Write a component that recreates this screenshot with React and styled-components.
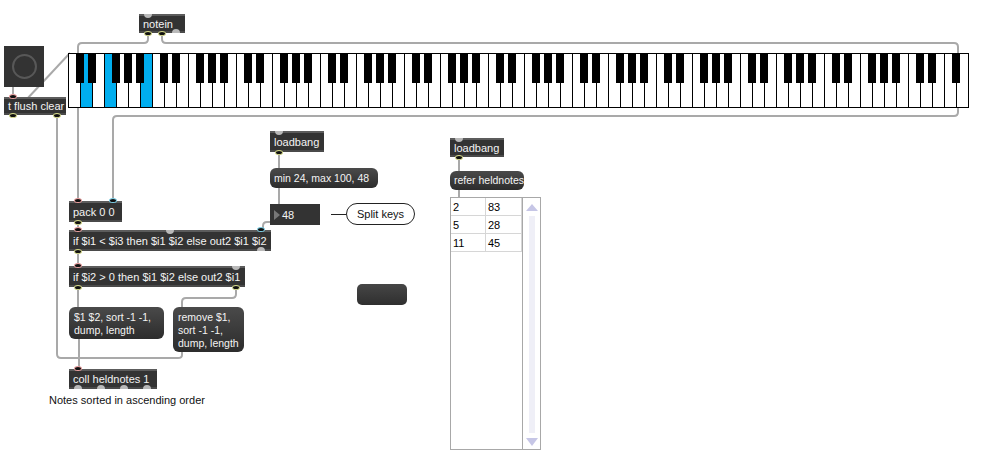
import React from 'react';
import styled, { createGlobalStyle, css } from 'styled-components';

const Global = createGlobalStyle`
  html, body { margin: 0; padding: 0; background: #fff; }
  body { font-family: "Liberation Sans", Arial, sans-serif; }
`;

const placed = css`
  position: absolute;
  left: ${(p) => p.$x}px;
  top: ${(p) => p.$y}px;
  width: ${(p) => p.$w}px;
  height: ${(p) => p.$h}px;
  box-sizing: border-box;
`;

const Canvas = styled.div`
  position: relative;
  width: 982px;
  height: 466px;
  overflow: hidden;
  background: #fff;
  font-size: 11px;
`;

const CordLayer = styled.svg`
  position: absolute;
  left: 0;
  top: 0;
  z-index: 0;
`;

const ObjectBox = styled.div`
  ${placed};
  z-index: 1;
  background: #333;
  box-shadow: inset 0 2px 0 #5c5c5c, inset 0 -2px 0 #4a4a4a;
  color: #f4f4f4;
  padding-left: 4px;
  display: flex;
  align-items: center;
  white-space: nowrap;
`;

const MessageBox = styled.div`
  ${placed};
  z-index: 1;
  background: linear-gradient(#4a4a4a, #2c2c2c);
  border-radius: 6px;
  color: #f4f4f4;
  font-size: 10.5px;
  padding: ${(p) => (p.$multi ? '4px 5px 0' : '0 3px 0 4px')};
  line-height: 13px;
  display: flex;
  align-items: ${(p) => (p.$multi ? 'flex-start' : 'center')};
  white-space: pre;
`;

const Port = styled.span`
  position: absolute;
  left: ${(p) => p.$at - 4}px;
  width: 8px;
  height: 5px;
  box-sizing: border-box;
  border-radius: 50%;
  background: #111;
  ${(p) => (p.$edge === 'top' ? 'top: -3px;' : 'bottom: -3px;')}
  border: 1.5px solid
    ${(p) => (p.$kind === 'hot' ? '#eea2a2' : p.$kind === 'cold' ? '#7fd3ea' : '#d6da8a')};
`;

const FreePort = styled.span`
  position: absolute;
  left: ${(p) => p.$at - 4}px;
  width: 8px;
  height: 4px;
  background: #b9b9b9;
  ${(p) =>
    p.$edge === 'top'
      ? 'top: 0; border-radius: 0 0 4px 4px;'
      : 'bottom: 0; border-radius: 4px 4px 0 0;'}
`;

const NumberBox = styled.div`
  ${placed};
  z-index: 1;
  background: #333;
  color: #f4f4f4;
  display: flex;
  align-items: center;
  gap: 2px;
  padding-left: 4px;
  &::before {
    content: '';
    width: 0;
    height: 0;
    border-top: 5px solid transparent;
    border-bottom: 5px solid transparent;
    border-left: 6px solid #777;
  }
`;

const Bubble = styled.div`
  ${placed};
  z-index: 1;
  background: #fff;
  border: 1px solid #222;
  border-radius: 11px;
  color: #111;
  display: flex;
  align-items: center;
  justify-content: center;
  &::before {
    content: '';
    position: absolute;
    left: -16px;
    top: 50%;
    width: 15px;
    height: 1px;
    background: #222;
  }
`;

const Comment = styled.div`
  ${placed};
  z-index: 1;
  color: #111;
  line-height: 13px;
  white-space: nowrap;
`;

const Dial = styled.div`
  ${placed};
  z-index: 1;
  background: #333;
  display: flex;
  align-items: center;
  justify-content: center;
  &::after {
    content: '';
    width: 21px;
    height: 21px;
    border-radius: 50%;
    border: 2.5px solid #585858;
  }
`;

const Pill = styled.div`
  ${placed};
  z-index: 1;
  border-radius: 5px;
  background: linear-gradient(#464646, #2f2f2f);
`;

const KeyboardFrame = styled.div`
  ${placed};
  z-index: 1;
  line-height: 0;
`;

const CellBlock = styled.div`
  ${placed};
  z-index: 1;
  background: #fff;
  border: 1px solid #a8a8a8;
  display: flex;
`;

const CellTable = styled.div`
  flex: 1;
  display: flex;
  flex-direction: column;
`;

const CellRow = styled.div`
  display: grid;
  grid-template-columns: 35px 36px;
  height: 18px;
`;

const Cell = styled.div`
  border-right: 1px solid #d6d6d6;
  border-bottom: 1px solid #d6d6d6;
  padding-left: 2px;
  display: flex;
  align-items: center;
  color: #000;
`;

const ScrollBar = styled.div`
  width: 18px;
  border-left: 1px solid #a8a8a8;
  display: flex;
  flex-direction: column;
  align-items: center;
  padding: 6px 0 3px;
  gap: 5px;
`;

const Arrow = styled.span`
  width: 0;
  height: 0;
  border-left: 6px solid transparent;
  border-right: 6px solid transparent;
  ${(p) =>
    p.$down ? 'border-top: 8px solid #c6c6e6;' : 'border-bottom: 7px solid #c6c6e6;'}
`;

const Track = styled.span`
  flex: 1;
  width: 6px;
  background: #efeff7;
`;

const cordPath = (pts, r = 4) => {
  if (pts.length === 2) return `M${pts[0][0]} ${pts[0][1]} L${pts[1][0]} ${pts[1][1]}`;
  let d = `M${pts[0][0]} ${pts[0][1]}`;
  for (let i = 1; i < pts.length - 1; i++) {
    const [px, py] = pts[i - 1];
    const [cx, cy] = pts[i];
    const [nx, ny] = pts[i + 1];
    const d1 = Math.hypot(cx - px, cy - py);
    const d2 = Math.hypot(nx - cx, ny - cy);
    const r1 = Math.min(r, d1 / 2);
    const r2 = Math.min(r, d2 / 2);
    const ax = cx - ((cx - px) / d1) * r1;
    const ay = cy - ((cy - py) / d1) * r1;
    const bx = cx + ((nx - cx) / d2) * r2;
    const by = cy + ((ny - cy) / d2) * r2;
    d += ` L${ax} ${ay} Q${cx} ${cy} ${bx} ${by}`;
  }
  const last = pts[pts.length - 1];
  return `${d} L${last[0]} ${last[1]}`;
};

const cords = [
  [[148, 33], [148, 43], [78, 43], [78, 54]],
  [[162, 33], [162, 43], [958, 43], [958, 54]],
  [[78, 107], [78, 202]],
  [[958, 107], [958, 116], [113, 116], [113, 202]],
  [[13, 87], [13, 97]],
  [[12, 115], [70, 53]],
  [[57, 115], [57, 358], [182, 358], [182, 352]],
  [[79, 339], [79, 369]],
  [[78, 287], [78, 307]],
  [[236, 287], [236, 298], [182, 298], [182, 307]],
  [[78, 222], [78, 230]],
  [[78, 251], [78, 266]],
  [[263, 231], [263, 222], [279, 222]],
  [[279, 152], [279, 225]],
  [[459, 156], [459, 197]],
];

const WHITE_COUNT = 75;
const held = new Set([1, 3, 6]);

function Keyboard() {
  const whites = Array.from({ length: WHITE_COUNT }, (_, i) => i);
  const blacks = whites.filter((i) => [0, 1, 3, 4, 5].includes(i % 7) && i < WHITE_COUNT - 1);
  return (
    <KeyboardFrame $x={68} $y={53} $w={901} $h={55}>
      <svg width="901" height="55" viewBox="0 0 901 55">
        <rect x="0.5" y="0.5" width="900" height="54" fill="#fff" stroke="#000" />
        {whites
          .filter((i) => held.has(i))
          .map((i) => (
            <rect key={`b${i}`} x={12 * i + 1} y="1" width="11" height="53" fill="#00aeef" />
          ))}
        {whites.slice(1).map((i) => (
          <line key={`l${i}`} x1={12 * i + 0.5} y1="0" x2={12 * i + 0.5} y2="55" stroke="#000" />
        ))}
        {blacks.map((i) => (
          <rect key={`k${i}`} x={12 * (i + 1) - 4} y="0" width="8" height="30" fill="#000" />
        ))}
      </svg>
    </KeyboardFrame>
  );
}

function Obj({ x, y, w, h = 21, text, ins = [], outs = [] }) {
  return (
    <ObjectBox $x={x} $y={y} $w={w} $h={h}>
      {text}
      {ins.map(([at, kind]) =>
        kind === 'free' ? (
          <FreePort key={`i${at}`} $edge="top" $at={at} />
        ) : (
          <Port key={`i${at}`} $edge="top" $at={at} $kind={kind} />
        )
      )}
      {outs.map(([at, kind]) =>
        kind === 'free' ? (
          <FreePort key={`o${at}`} $edge="bottom" $at={at} />
        ) : (
          <Port key={`o${at}`} $edge="bottom" $at={at} $kind="out" />
        )
      )}
    </ObjectBox>
  );
}

const rows = [
  ['2', '83'],
  ['5', '28'],
  ['11', '45'],
];

export default function App() {
  return (
    <>
      <Global />
      <Canvas>
        <CordLayer width="982" height="466">
          {cords.map((pts, i) => (
            <path
              key={i}
              d={cordPath(pts)}
              fill="none"
              stroke="#a9a9a9"
              strokeWidth="2"
              strokeLinecap="butt"
            />
          ))}
        </CordLayer>

        <Obj x={139} y={14} w={46} h={19} text="notein" ins={[[9, 'free']]} outs={[[9, 'out'], [23, 'out'], [37, 'free']]} />
        <Dial $x={4} $y={46} $w={40} $h={41} />
        <Obj x={4} y={97} w={62} h={18} text="t flush clear" ins={[[9, 'hot']]} outs={[[9, 'out'], [53, 'out']]} />
        <Keyboard />

        <Obj x={69} y={201} w={53} text="pack 0 0" ins={[[9, 'hot'], [44, 'cold']]} outs={[[9, 'out']]} />
        <Obj
          x={69}
          y={230}
          w={202}
          text="if $i1 < $i3 then $i1 $i2 else out2 $i1 $i2"
          ins={[[9, 'hot'], [101, 'free'], [192, 'cold']]}
          outs={[[9, 'out'], [192, 'free']]}
        />
        <Obj
          x={69}
          y={266}
          w={176}
          text="if $i2 > 0 then $i1 $i2 else out2 $i1"
          ins={[[9, 'hot'], [167, 'free']]}
          outs={[[9, 'out'], [167, 'out']]}
        />
        <MessageBox $x={69} $y={307} $w={95} $h={32} $multi>
          {'$1 $2, sort -1 -1,\ndump, length'}
        </MessageBox>
        <MessageBox $x={173} $y={307} $w={71} $h={45} $multi>
          {'remove $1,\nsort -1 -1,\ndump, length'}
        </MessageBox>
        <Obj
          x={69}
          y={369}
          w={88}
          h={20}
          text="coll heldnotes 1"
          ins={[[9, 'hot']]}
          outs={[[9, 'free'], [32, 'free'], [55, 'free'], [78, 'free']]}
        />
        <Comment $x={49} $y={394} $w={170} $h={14}>
          Notes sorted in ascending order
        </Comment>

        <Obj x={270} y={131} w={54} text="loadbang" ins={[[9, 'free']]} outs={[[9, 'out']]} />
        <MessageBox $x={270} $y={168} $w={108} $h={20}>
          min 24, max 100, 48
        </MessageBox>
        <NumberBox $x={270} $y={204} $w={50} $h={21}>
          48
        </NumberBox>
        <Bubble $x={346} $y={203} $w={69} $h={22}>
          Split keys
        </Bubble>

        <Pill $x={357} $y={284} $w={50} $h={21} />

        <Obj x={450} y={138} w={54} h={19} text="loadbang" ins={[[9, 'free']]} outs={[[9, 'out']]} />
        <MessageBox $x={450} $y={171} $w={74} $h={19}>
          refer heldnotes
        </MessageBox>
        <CellBlock $x={450} $y={197} $w={91} $h={253}>
          <CellTable>
            {rows.map(([a, b]) => (
              <CellRow key={a}>
                <Cell>{a}</Cell>
                <Cell>{b}</Cell>
              </CellRow>
            ))}
          </CellTable>
          <ScrollBar>
            <Arrow />
            <Track />
            <Arrow $down />
          </ScrollBar>
        </CellBlock>
      </Canvas>
    </>
  );
}
